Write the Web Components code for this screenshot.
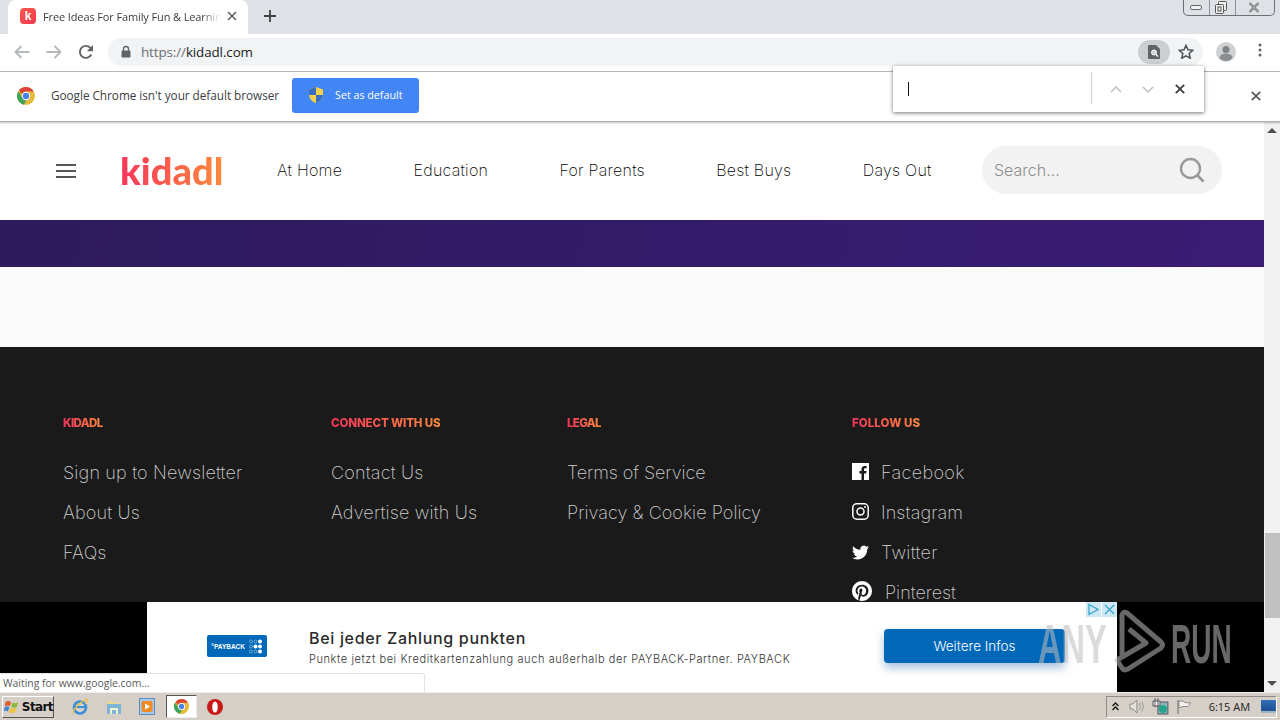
<!DOCTYPE html>
<html lang="en"><head><meta charset="utf-8"><title>Kidadl</title>
<style>
html,body{margin:0;height:720px;overflow:hidden;background:#fff}
body{display:flex;flex-direction:column;position:relative;width:1280px;font-family:"Open Sans","Liberation Sans",sans-serif}
</style></head><body>
<x-tabstrip title-text="Free Ideas For Family Fun &amp; Learning"></x-tabstrip>
<x-toolbar></x-toolbar>
<x-infobar></x-infobar>
<x-viewport>
  <x-site-header></x-site-header>
  <x-band></x-band>
  <x-site-footer>
    <x-foot-col heading="KIDADL" style="letter-spacing:-.58px"><x-foot-link>Sign up to Newsletter</x-foot-link><x-foot-link>About Us</x-foot-link><x-foot-link>FAQs</x-foot-link></x-foot-col>
    <x-foot-col heading="CONNECT WITH US" style="letter-spacing:-.12px"><x-foot-link>Contact Us</x-foot-link><x-foot-link>Advertise with Us</x-foot-link></x-foot-col>
    <x-foot-col heading="LEGAL" style="letter-spacing:-.65px"><x-foot-link style="letter-spacing:-.08px">Terms of Service</x-foot-link><x-foot-link style="letter-spacing:.05px">Privacy &amp; Cookie Policy</x-foot-link></x-foot-col>
    <x-foot-col heading="FOLLOW US" style="letter-spacing:.08px"><x-foot-link icon="fb" style="letter-spacing:.35px">Facebook</x-foot-link><x-foot-link icon="ig" style="letter-spacing:.1px">Instagram</x-foot-link><x-foot-link icon="tw" style="letter-spacing:.3px">Twitter</x-foot-link><x-foot-link icon="pi" style="letter-spacing:0">Pinterest</x-foot-link></x-foot-col>
  </x-site-footer>
  <x-ad-banner></x-ad-banner>
  <x-status-bubble>Waiting for www.google.com...</x-status-bubble>
</x-viewport>
<x-taskbar></x-taskbar>
<x-findbar></x-findbar>
<x-watermark></x-watermark>
<script>
const chromeLogo=(s)=>`<svg width="${s}" height="${s}" viewBox="0 0 24 24"><circle cx="12" cy="12" r="12" fill="#e5b93a"/><path d="M12 0a12 12 0 0 1 10.400 6H12a6 6 0 0 0-5.600 3.600L2.600 4.400A12 12 0 0 1 12 0z" fill="#db4437"/><path d="M1.900 5.500 7 14.400a6 6 0 0 0 5.600 3.600l-3.600 5.600A12 12 0 0 1 1.900 5.500z" fill="#3da35a"/><circle cx="12" cy="12" r="5.600" fill="#fff"/><circle cx="12" cy="12" r="4.300" fill="#4a80e8"/></svg>`;
function def(name,css,html){
  customElements.define(name,class extends HTMLElement{
    constructor(){super();this.attachShadow({mode:'open'})}
    connectedCallback(){
      const h=typeof html==='function'?html(this):html;
      this.shadowRoot.innerHTML=`<style>${css}</style>${h}`;
    }
  });
}
def('x-tabstrip',`
:host{display:flex;height:34px;background:#dee1e6;flex:none;font:11px "Open Sans","Liberation Sans",sans-serif;color:#3c4043;padding-left:8px;box-sizing:border-box}
.tab{width:240px;height:34px;background:#fff;border-radius:8px 8px 0 0;display:flex;align-items:center;padding:0 11px 2px 12px;box-sizing:border-box;gap:7px}
.fav{width:16px;height:16px;border-radius:4px;background:linear-gradient(135deg,#ff5a4a,#f4364f);color:#fff;font:bold 12px "Liberation Sans",sans-serif;display:flex;align-items:center;justify-content:center;flex:none}
.t{flex:1;white-space:nowrap;overflow:hidden;letter-spacing:-.12px;-webkit-mask-image:linear-gradient(90deg,#000 90%,transparent);mask-image:linear-gradient(90deg,#000 90%,transparent)}
.plus{margin:0 0 2px 16px;align-self:center;display:flex}
.win{margin-left:auto;margin-right:5px;align-self:flex-start;display:flex;height:16px;border:1px solid #6b6f76;border-top:none;border-radius:0 0 5px 5px;width:92px;box-sizing:border-box}
.win div{display:flex;align-items:center;justify-content:center;border-right:1px solid #8d9096}
.win div:last-child{border:none}
`,(e)=>`<div class="tab"><div class="fav">k</div><div class="t">${e.getAttribute('title-text').replace('&','&amp;')}</div>
<svg width="10" height="10" viewBox="0 0 10 10"><path d="M1 1l8 8M9 1L1 9" stroke="#5f6368" stroke-width="1.600"/></svg></div>
<div class="plus"><svg width="12" height="12" viewBox="0 0 12 12"><path d="M6 0v12M0 6h12" stroke="#3c4043" stroke-width="1.800"/></svg></div>
<div class="win"><div style="width:25px"><svg width="13" height="7" viewBox="0 0 13 7"><rect x=".5" y="1.500" width="11" height="4" rx="1.500" fill="#f2f3f5" stroke="#666"/></svg></div>
<div style="width:25px"><svg style="margin-right:4px" width="12" height="13" viewBox="0 0 12 13"><rect x="3.500" y=".5" width="8" height="9" rx="1" fill="#eee" stroke="#555"/><rect x=".5" y="3.500" width="8" height="9" rx="1" fill="#eee" stroke="#555"/><rect x="3" y="6" width="3" height="4" fill="none" stroke="#555"/></svg></div>
<div style="flex:1"><svg style="margin-right:2px" width="12" height="11" viewBox="0 0 12 11"><path d="M1.500 1 6 5.500 10.500 1M1.500 10 6 5.500 10.500 10" fill="none" stroke="#666" stroke-width="2.200"/><path d="M1.500 1 6 5.500 10.500 1M1.500 10 6 5.500 10.500 10" fill="none" stroke="#eee" stroke-width=".7"/></svg></div></div>`);
def('x-toolbar',`
:host{display:flex;align-items:center;height:38px;flex:none;background:#fff;border-bottom:1px solid #b9babb;box-sizing:border-box;padding:0 0 2px 13px;font:14px "Open Sans","Liberation Sans",sans-serif}
.b{width:18px;height:18px;display:flex;align-items:center;justify-content:center;margin-right:14px;flex:none}
.omni{width:1095px;height:28px;margin:0 0 0 -1px;border-radius:14px;background:#f1f3f4;display:flex;align-items:center;padding:0 1px 0 12px;box-sizing:border-box;color:#222;flex:none}
.u{margin-left:9px;font-size:13.400px;letter-spacing:-.1px}.u span{color:#6b6f73}
.chip{margin-left:auto;width:32px;height:24px;border-radius:12px;background:#ccced0;display:flex;align-items:center;justify-content:center}
.star{width:32px;display:flex;justify-content:center}
.av{width:20px;height:20px;margin-left:13px;border-radius:50%;background:#cfd1d3;overflow:hidden;flex:none}
.k{margin-left:22px;width:4px}
`,`<div class="b"><svg width="16" height="14" viewBox="0 0 16 14"><path d="M15.500 7H2M7.500 1 1.500 7l6 6" fill="none" stroke="#b6b9bc" stroke-width="1.900"/></svg></div>
<div class="b"><svg width="16" height="14" viewBox="0 0 16 14"><path d="M.5 7H14M8.500 1l6 6-6 6" fill="none" stroke="#b6b9bc" stroke-width="1.900"/></svg></div>
<div class="b"><svg width="16" height="16" viewBox="0 0 16 16"><path d="M13.300 10.500A6 6 0 1 1 12.200 3.700L14 5.500" fill="none" stroke="#5f6368" stroke-width="1.900"/><path d="M15 1v6.200H8.800z" fill="#5f6368"/></svg></div>
<div class="omni"><svg width="12" height="13" viewBox="0 0 12 13"><path d="M3.500 6V4a2.500 2.500 0 0 1 5 0v2" fill="none" stroke="#5f6368" stroke-width="1.300"/><rect x="1.500" y="5.500" width="9" height="7" rx="1" fill="#5f6368"/></svg>
<div class="u"><span>https://</span>kidadl.com</div>
<div class="chip"><svg width="12" height="14" viewBox="0 0 12 14"><path d="M1 0h7l4 4v9a1 1 0 0 1-1 1H1a1 1 0 0 1-1-1V1a1 1 0 0 1 1-1z" fill="#5f6368"/><circle cx="6" cy="7.500" r="2.500" fill="#ccced0" stroke="#fff" stroke-width="1"/><path d="M8 9.500l2 2" stroke="#fff" stroke-width="1.200"/></svg></div>
<div class="star"><svg width="16" height="15" viewBox="0 0 16 15"><path d="M8 1.400l2 4.400 4.800.5-3.600 3.200 1 4.700L8 11.800l-4.200 2.400 1-4.700L1.200 6.300 6 5.800z" fill="none" stroke="#4d5155" stroke-width="1.500"/></svg></div></div>
<div class="av"><svg width="20" height="20" viewBox="0 0 20 20"><circle cx="10" cy="7.500" r="3.500" fill="#7f8285"/><path d="M3.500 16c0-3 3-4.500 6.500-4.500s6.500 1.500 6.500 4.500c-1.500 2-4 3-6.500 3s-5-1-6.500-3z" fill="#8b8e91"/></svg></div>
<div class="k"><svg width="4" height="14" viewBox="0 0 4 14"><circle cx="2" cy="2" r="1.500" fill="#5f6368"/><circle cx="2" cy="7" r="1.500" fill="#5f6368"/><circle cx="2" cy="12" r="1.500" fill="#5f6368"/></svg></div>`);
def('x-infobar',`
:host{display:flex;align-items:center;height:50px;flex:none;background:#fff;box-sizing:border-box;padding:0 19px 1px 17px;font:11.800px "Open Sans","Liberation Sans",sans-serif;color:#3c4043;border-bottom:1px solid #aeaeae;box-shadow:0 1px 2px rgba(0,0,0,.25);position:relative;z-index:2}
.m{margin-left:16px;white-space:nowrap;letter-spacing:-.05px;margin-bottom:2px}
.btn{margin-left:13px;width:127px;height:35px;background:#4285f4;border-radius:3px;color:#fff;font-size:10.700px;display:flex;align-items:center;padding-left:17px;box-sizing:border-box;gap:12px;position:relative;top:-1px}
.x{margin-left:auto;display:flex}
`,`${chromeLogo(18)}<div class="m">Google Chrome isn't your default browser</div>
<div class="btn"><svg width="14" height="16" viewBox="0 0 14 16"><path d="M7 0l7 2.500v5C14 12 10.500 15 7 16 3.500 15 0 12 0 7.500v-5z" fill="#f6d14e"/><path d="M7 0v8H0V2.500zM7 8h7c-.4 4-3.500 7-7 8z" fill="#3b6fc4"/></svg><span>Set as default</span></div>
<div class="x"><svg width="10" height="10" viewBox="0 0 10 10"><path d="M.8.800l8.400 8.400M9.200.800.800 9.200" stroke="#55595d" stroke-width="1.700"/></svg></div>`);
def('x-viewport',`
:host{display:flex;flex-direction:column;flex:1;min-height:0;position:relative;overflow:hidden;background:#fafafa;padding-right:16px}
.sb{position:absolute;right:0;top:0;bottom:0;width:16px;background:#f1f1f1;display:flex;flex-direction:column;align-items:center;justify-content:space-between}
.thumb{position:absolute;left:1px;right:0;top:411px;height:85px;background:#c1c1c1}
.a{width:0;height:0;border-left:5px solid transparent;border-right:5px solid transparent;margin:6px 0}
`,`<slot></slot><div class="sb"><div class="a" style="border-bottom:5px solid #505050"></div><div class="thumb"></div><div class="a" style="border-top:5px solid #505050"></div></div>`);
def('x-site-header',`
:host{display:flex;align-items:center;height:98px;flex:none;background:#fff;box-sizing:border-box;padding:0 42px 0 56px;font:200 16px Inter,"Open Sans",sans-serif;color:#000}
.logo{margin-left:44px;width:103px;font:900 38px/1 Lato,"Open Sans",sans-serif;background:linear-gradient(90deg,#f9355b,#ff8a3c);-webkit-background-clip:text;background-clip:text;color:transparent;position:relative;top:-1px;letter-spacing:.05px;white-space:nowrap}
nav{display:flex;gap:71.300px;margin-left:54px;white-space:nowrap;position:relative;top:-1px;letter-spacing:.25px}
.s{margin-left:auto;width:240px;height:48px;border-radius:24px;background:#f2f2f2;display:flex;align-items:center;padding:0 17px 0 12px;box-sizing:border-box;color:#8e8e8e;font-size:16px;font-weight:300;justify-content:space-between;position:relative;top:-1px}
`,`<svg width="20" height="14" viewBox="0 0 20 14"><path d="M0 1h20M0 7h20M0 13h20" stroke="#555" stroke-width="2"/></svg><div class="logo">kidadl</div>
<nav><span>At Home</span><span>Education</span><span>For Parents</span><span>Best Buys</span><span>Days Out</span></nav>
<div class="s"><span>Search...</span><svg width="26" height="26" viewBox="0 0 26 26"><circle cx="11.500" cy="11.500" r="9.500" fill="none" stroke="#999" stroke-width="2.400"/><path d="M18.500 18.500l6 6" stroke="#999" stroke-width="2.600"/></svg></div>`);
def('x-band',`
:host{display:flex;flex-direction:column;height:127px;flex:none;background:#fafafa}
.p{height:47px;background:linear-gradient(100deg,#2d1a5b,#341c6b 60%,#3a1c74)}
`,`<div class="p"></div>`);
def('x-site-footer',`
:host{display:grid;grid-template-columns:268px 236px 285px 1fr;flex:1;min-height:0;overflow:hidden;background:#1a1a1a;padding:68px 0 0 63px;box-sizing:border-box;align-content:start}
`,`<slot></slot>`);
def('x-foot-col',`
:host{display:flex;flex-direction:column}
h4{margin:0 0 22px;font:800 11.500px/16px Inter,"Open Sans",sans-serif;width:max-content;background:linear-gradient(90deg,#f9355b,#ff8a3c);-webkit-background-clip:text;background-clip:text;color:transparent}
`,(e)=>`<h4>${e.getAttribute('heading')}</h4><slot></slot>`);
const ICONS={
fb:`<svg width="17" height="17" viewBox="0 0 17 17" style="margin:-4px 12px 0 0;flex:none"><path d="M0 0h17v17h-5v-6.500h2.200l.3-2.500H12V6.500c0-.8.300-1.200 1.200-1.200h1.400V3.100c-.5-.1-1.200-.1-1.800-.1-2 0-3.300 1.200-3.300 3.300V8H7.400v2.500h2.100V17H0z" fill="#fff"/></svg>`,
ig:`<svg width="17" height="17" viewBox="0 0 17 17" style="margin:-4px 12px 0 0;flex:none"><rect x=".8" y=".8" width="15.400" height="15.400" rx="4" fill="none" stroke="#fff" stroke-width="1.500"/><circle cx="8.500" cy="8.500" r="3.500" fill="none" stroke="#fff" stroke-width="1.500"/><circle cx="13" cy="4" r="1" fill="#fff"/></svg>`,
tw:`<svg width="17" height="17" viewBox="0 0 24 24" style="margin:-1px 12px 0 0;flex:none"><path fill="#fff" d="M23.953 4.570a10 10 0 01-2.825.775 4.958 4.958 0 002.163-2.723c-.951.555-2.005.959-3.127 1.184a4.920 4.920 0 00-8.384 4.482C7.690 8.095 4.067 6.130 1.640 3.162a4.822 4.822 0 00-.666 2.475c0 1.710.870 3.213 2.188 4.096a4.904 4.904 0 01-2.228-.616v.060a4.923 4.923 0 003.946 4.827 4.996 4.996 0 01-2.212.085 4.936 4.936 0 004.604 3.417 9.867 9.867 0 01-6.102 2.105c-.390 0-.779-.023-1.170-.067a13.995 13.995 0 007.557 2.209c9.053 0 13.998-7.496 13.998-13.985 0-.210 0-.420-.015-.630A9.935 9.935 0 0024 4.590z"/></svg>`,
pi:`<svg width="20" height="20" viewBox="0 0 24 24" style="margin:-5px 13px 0 0;flex:none"><path fill="#fff" d="M12.017 0C5.396 0 .029 5.367.029 11.987c0 5.079 3.158 9.417 7.618 11.162-.105-.949-.199-2.403.041-3.439.219-.937 1.406-5.957 1.406-5.957s-.359-.720-.359-1.781c0-1.663.967-2.911 2.168-2.911 1.024 0 1.518.769 1.518 1.688 0 1.029-.653 2.567-.992 3.992-.285 1.193.600 2.165 1.775 2.165 2.128 0 3.768-2.245 3.768-5.487 0-2.861-2.063-4.869-5.008-4.869-3.410 0-5.409 2.562-5.409 5.199 0 1.033.394 2.143.889 2.741.099.120.112.225.085.345-.090.375-.293 1.199-.334 1.363-.053.225-.172.271-.401.165-1.495-.690-2.433-2.878-2.433-4.646 0-3.776 2.748-7.252 7.920-7.252 4.158 0 7.392 2.967 7.392 6.923 0 4.135-2.607 7.462-6.233 7.462-1.214 0-2.354-.629-2.758-1.379l-.749 2.848c-.269 1.045-1.004 2.352-1.498 3.146 1.123.345 2.306.535 3.550.535 6.607 0 11.985-5.365 11.985-11.987C23.970 5.390 18.592.026 11.985.026L12.017 0z"/></svg>`};
def('x-foot-link',`
:host{display:flex;align-items:center;height:40px;font:200 18px/40px Inter,"Open Sans",sans-serif;color:#cfcfcf;white-space:nowrap;letter-spacing:.17px}
`,(e)=>`${ICONS[e.getAttribute('icon')]||''}<slot></slot>`);
def('x-ad-banner',`
:host{position:absolute;left:0;right:16px;bottom:0;height:90px;background:#000;display:flex;justify-content:center;font-family:Inter,"Open Sans",sans-serif}
.c{position:relative;width:970px;background:#fff;display:flex;align-items:center;box-sizing:border-box;padding:0 52px 0 60px;height:90px}
.lg{width:60px;height:22px;background:#0068b9;border-radius:2px;color:#fff;display:flex;align-items:center;justify-content:flex-end;padding:0 4px;box-sizing:border-box;gap:3px;font:bold 6.500px "Liberation Sans",sans-serif;flex:none;margin-top:-2px}
.tx{margin-left:42px;flex:1;margin-top:3px}
.h{font-size:16px;font-weight:500;color:#2b2b2b;letter-spacing:.67px;line-height:21px;white-space:nowrap}
.p{font-size:11px;font-weight:300;color:#333;letter-spacing:.58px;line-height:20px;white-space:nowrap}
.cta{width:181px;height:34px;background:#0068b9;border-radius:4px;color:#fff;font-size:13.500px;font-weight:300;display:flex;align-items:center;justify-content:center;box-shadow:0 5px 10px rgba(0,80,160,.35);flex:none;margin-top:-2px}
.ac{position:absolute;right:0;top:0;display:flex;gap:1px}
.ac div{width:15px;height:15px;background:#cde8f3;display:flex;align-items:center;justify-content:center}
`,`<div class="c"><div class="lg"><span>°PAYBACK</span><svg width="15" height="15" viewBox="0 0 15 15" fill="#fff"><circle cx="3" cy="2.500" r="1.500" fill="none" stroke="#bcd" stroke-width=".6"/><circle cx="7.500" cy="2.500" r="1.500" fill="none" stroke="#bcd" stroke-width=".6"/><circle cx="12" cy="2.500" r="2"/><circle cx="3" cy="7.500" r="1.500" fill="none" stroke="#bcd" stroke-width=".6"/><circle cx="7.500" cy="7.500" r="2"/><circle cx="12" cy="7.500" r="2"/><circle cx="3" cy="12.500" r="1.500" fill="none" stroke="#bcd" stroke-width=".6"/><circle cx="7.500" cy="12.500" r="1.500" fill="none" stroke="#bcd" stroke-width=".6"/><circle cx="12" cy="12.500" r="2"/></svg></div>
<div class="tx"><div class="h">Bei jeder Zahlung punkten</div><div class="p">Punkte jetzt bei Kreditkartenzahlung auch außerhalb der PAYBACK-Partner. PAYBACK</div></div>
<div class="cta">Weitere Infos</div>
<div class="ac"><div><svg width="11" height="13" viewBox="0 0 11 13"><path d="M1 1.500l9 5-9 5z" fill="none" stroke="#3aa6cf" stroke-width="1.300"/></svg></div><div><svg width="11" height="11" viewBox="0 0 11 11"><path d="M1 1l9 9M10 1l-9 9" stroke="#3aa6cf" stroke-width="1.400"/></svg></div></div></div>`);
def('x-status-bubble',`
:host{position:absolute;left:0;bottom:0;width:425px;height:19px;background:#fff;border:1px solid #e3e3e3;border-left:none;border-bottom:none;border-radius:0 3px 0 0;box-sizing:border-box;font:10.400px/18px "Open Sans","Liberation Sans",sans-serif;color:#5a5a5a;padding-left:3px;white-space:nowrap}
`,`<slot></slot>`);
def('x-taskbar',`
:host{display:flex;align-items:center;height:28px;flex:none;background:#d5cfc8;border-top:1px solid #eee;box-sizing:border-box;position:relative;padding-left:2px}
.st{width:52px;height:22px;box-sizing:border-box;border:1px solid;border-color:#fff #555 #555 #fff;display:flex;align-items:center;gap:2px;padding-left:1px;font:bold 12px "DejaVu Sans",sans-serif;letter-spacing:-.6px;color:#111}
.i{display:flex;align-items:center;justify-content:center;flex:none}
.ch{width:31px;height:23px;background:#fff;border:1px solid;border-color:#555 #eee #eee #555;box-sizing:border-box;display:flex;align-items:center;justify-content:center;margin-left:10px}
.tray{margin-left:auto;margin-right:3px;width:171px;height:22px;border:1px solid;border-color:#8f8c87 #fff #fff #8f8c87;box-sizing:border-box;display:flex;align-items:center;font:11px "Open Sans","Liberation Sans",sans-serif;color:#222}
`,`<div class="st"><svg width="18" height="18" viewBox="0 0 18 18"><path d="M2 3c2-1 4-1 6 .500L6.500 8C5 7 3 7 1 8z" fill="#e2562a"/><path d="M9 4c2 1 4 1 7 0l-1.500 5c-2 1-4 1-6 0z" fill="#8cb83a"/><path d="M1 9c2-1 3-1 5 0l-1.500 5c-1.500-1-3-1-5 0z" fill="#3f83d8"/><path d="M7 10c2 1 4 1 7 0l-1.500 5c-2 1-4 1-7 0z" fill="#f0c33c"/></svg><span>Start</span></div>
<div class="i" style="width:18px;margin-left:17px"><svg width="18" height="18" viewBox="0 0 18 18"><circle cx="9" cy="9.500" r="6" fill="none" stroke="#3d8fd8" stroke-width="2.600"/><path d="M4 9h10" stroke="#3d8fd8" stroke-width="2"/><path d="M2 16C1 13 8 4 16 1c2 1-1 4-2 5" fill="none" stroke="#e6c04c" stroke-width="1.200"/></svg></div>
<div class="i" style="width:16px;margin-left:17px"><svg width="16" height="16" viewBox="0 0 16 16"><path d="M1 2h6l1 2h6v2H1z" fill="#e8d890"/><path d="M1 5h14v10H1z" fill="#7fb4d6"/><path d="M4 15V9h8v6h-2v-4H6v4z" fill="#eef3d0"/></svg></div>
<div class="i" style="width:16px;margin-left:17px"><svg width="16" height="17" viewBox="0 0 16 17"><rect x=".5" y=".5" width="15" height="16" fill="#a9c8e6" stroke="#5d8fc2"/><rect x="2.500" y="3" width="11" height="11" rx="2" fill="#f08a24"/><path d="M6 5.500v6l5-3z" fill="#fff"/></svg></div>
<div class="ch" style="margin-left:11px">${chromeLogo(15)}</div>
<div class="i" style="width:16px;margin-left:10px"><svg width="16" height="16" viewBox="0 0 16 16"><circle cx="8" cy="8" r="8" fill="#c81818"/><ellipse cx="8" cy="8" rx="2.800" ry="5.600" fill="#fff"/></svg></div>
<div class="tray"><svg style="margin-left:5px" width="7" height="9" viewBox="0 0 7 9"><path d="M.5 4l3-3 3 3M.5 8l3-3 3 3" fill="none" stroke="#111" stroke-width="1.300"/></svg>
<svg style="margin-left:10px" width="16" height="15" viewBox="0 0 16 15"><path d="M1 5h3l4-4v13l-4-4H1z" fill="#e4e2dd" stroke="#8a8a8a"/><path d="M10.500 4q2 3.500 0 7M13 2.500q3 5 0 10" fill="none" stroke="#999"/></svg>
<svg style="margin-left:7px" width="17" height="17" viewBox="0 0 17 17"><rect x="6" y="4" width="10" height="12" fill="#8fb7c8" stroke="#555"/><path d="M3 0v9M6 0v9M1 3h7v5H1z" fill="#fff" stroke="#555"/><circle cx="11" cy="11" r="4" fill="#22a58c"/></svg>
<svg style="margin-left:7px" width="16" height="16" viewBox="0 0 16 16"><path d="M2 1v14" stroke="#8a8a8a" stroke-width="1.500"/><path d="M3 2h4l2 1.500 6 .5-3 3.500H7L3 9z" fill="#f2f0ec" stroke="#8a8a8a"/></svg>
<span style="margin-left:17px;white-space:nowrap">6:15 AM</span>
<svg style="margin-left:11px" width="15" height="13" viewBox="0 0 15 13"><defs><linearGradient id="d" x1="0" y1="0" x2="0" y2="1"><stop offset="0" stop-color="#2f6fb8"/><stop offset="1" stop-color="#1f4f94"/></linearGradient></defs><rect width="15" height="11" fill="url(#d)"/><rect y="11" width="15" height="2" fill="#9fb5c8"/></svg></div>`);
def('x-findbar',`
:host{position:absolute;left:893px;top:66px;width:311px;height:46px;background:#fff;box-shadow:0 1px 4px rgba(0,0,0,.55);display:flex;align-items:center;z-index:5;box-sizing:border-box;padding-left:15px}
.c{width:1px;height:14px;background:#111}
.d{width:1px;height:32px;background:#d0d2d4;margin-left:182px;margin-right:18px;position:relative;top:-1px}
svg{display:block;flex:none}
`,`<div class="c"></div><div class="d"></div>
<svg width="12" height="7" viewBox="0 0 12 7"><path d="M1 6l5-5 5 5" fill="none" stroke="#bcbec0" stroke-width="1.500"/></svg>
<svg style="margin-left:20px" width="12" height="7" viewBox="0 0 12 7"><path d="M1 1l5 5 5-5" fill="none" stroke="#bcbec0" stroke-width="1.500"/></svg>
<svg style="margin-left:21px" width="10" height="10" viewBox="0 0 10 10"><path d="M.8.800l8.400 8.400M9.200.800.800 9.200" stroke="#3c4043" stroke-width="1.900"/></svg>`);
def('x-watermark',`
:host{position:absolute;left:1040px;top:606px;width:200px;height:70px;z-index:6;pointer-events:none;font:bold 56px/1 "Liberation Sans",sans-serif;color:rgba(190,190,190,.55)}
span{position:absolute;top:10px;transform-origin:0 0;white-space:nowrap}
svg{position:absolute;left:0;top:0}
`,`<span style="left:-2px;transform:scaleX(.58)">ANY</span><span style="left:131px;transform:scaleX(.5)">RUN</span>
<svg width="200" height="70" viewBox="1040 606 200 70"><path d="M1122 656V615q1-4 5-2l34 29q3 3 0 6l-33 21q-4 2-6-1l-5-8 29-17-17-14" fill="none" stroke="rgba(190,190,190,.55)" stroke-width="5" stroke-linejoin="round"/></svg>`);
</script>
</body></html>
